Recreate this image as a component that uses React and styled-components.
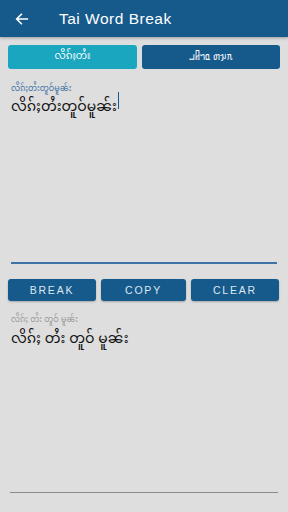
import React from "react";
import styled, { createGlobalStyle } from "styled-components";

const GlobalStyle = createGlobalStyle`
  html, body {
    margin: 0;
    padding: 0;
    background: #dedede;
    font-family: "Liberation Sans", "Noto Sans", "Noto Sans Myanmar", sans-serif;
  }
`;

const Screen = styled.div`
  width: 288px;
  height: 512px;
  display: flex;
  flex-direction: column;
  background: #dedede;
  overflow: hidden;
`;

const AppBar = styled.div`
  height: 37px;
  background: #165a8c;
  display: flex;
  align-items: center;
  padding-left: 14px;
  gap: 29px;
  box-shadow: 0 1px 3px rgba(0, 0, 0, 0.3);
  flex-shrink: 0;
`;

const Title = styled.span`
  color: #ffffff;
  font-size: 15.5px;
  font-weight: 400;
  letter-spacing: 0.5px;
`;

const Tabs = styled.div`
  display: grid;
  grid-template-columns: 129px 1fr;
  gap: 5px;
  padding: 8px 8px 0 8px;
`;

const Tab = styled.div`
  height: 24px;
  border-radius: 3px;
  background: ${(p) => (p.active ? "#1ba6bf" : "#165a8c")};
  color: #ffffff;
  font-size: 10px;
  display: flex;
  align-items: center;
  justify-content: center;
`;

const Field = styled.div`
  padding: 11px 11px 0 11px;
  display: flex;
  flex-direction: column;
`;

const Label = styled.div`
  font-size: 8px;
  color: ${(p) => p.color || "#3f72a4"};
  height: 11px;
`;

const InputText = styled.div`
  font-size: 14px;
  color: #111;
  height: 170px;
  display: flex;
  align-items: flex-start;
  padding-top: 1px;
`;

const Caret = styled.span`
  display: inline-block;
  width: 1.5px;
  height: 17px;
  background: #165a8c;
  margin-left: 1px;
`;

const Underline = styled.div`
  height: 2px;
  background: #3f72a4;
`;

const Buttons = styled.div`
  display: grid;
  grid-template-columns: 88px 85px 88px;
  gap: 5px;
  padding: 15px 8px 0 8px;
`;

const Button = styled.div`
  height: 22px;
  border-radius: 3px;
  background: #165a8c;
  color: #dfe8f0;
  font-size: 10.5px;
  letter-spacing: 1.8px;
  display: flex;
  align-items: center;
  justify-content: center;
  box-shadow: 0 1px 2px rgba(0, 0, 0, 0.25);
`;

const Output = styled.div`
  padding: 10px 11px 0 11px;
  flex: 1;
  display: flex;
  flex-direction: column;
`;

const OutputText = styled.div`
  font-size: 14px;
  color: #111;
  margin-top: 2px;
`;

const Spacer = styled.div`
  flex: 1;
`;

const BottomLine = styled.div`
  height: 1px;
  background: #8a8a8a;
  margin: 0 10px 19px 10px;
`;

const BackArrow = () => (
  <svg width="16" height="16" viewBox="0 0 24 24" fill="none" stroke="#fff" strokeWidth="2.4" strokeLinecap="square">
    <path d="M20 12H5M11 5l-7 7 7 7" />
  </svg>
);

export default function App() {
  return (
    <Screen>
      <GlobalStyle />
      <AppBar>
        <BackArrow />
        <Title>Tai Word Break</Title>
      </AppBar>
      <Tabs>
        <Tab active>လိၵ်ႈတႆး</Tab>
        <Tab>ᥘᥤᥐᥲ ᥖᥭᥰ</Tab>
      </Tabs>
      <Field>
        <Label>လိၵ်ႈတႆးတူဝ်မူၼ်း</Label>
        <InputText>
          လိၵ်ႈတႆးတူဝ်မူၼ်း
          <Caret />
        </InputText>
        <Underline />
      </Field>
      <Buttons>
        <Button>BREAK</Button>
        <Button>COPY</Button>
        <Button>CLEAR</Button>
      </Buttons>
      <Output>
        <Label color="#9a9a9a">လိၵ်ႈ တႆး တူဝ် မူၼ်း</Label>
        <OutputText>လိၵ်ႈ တႆး တူဝ် မူၼ်း</OutputText>
        <Spacer />
      </Output>
      <BottomLine />
    </Screen>
  );
}
